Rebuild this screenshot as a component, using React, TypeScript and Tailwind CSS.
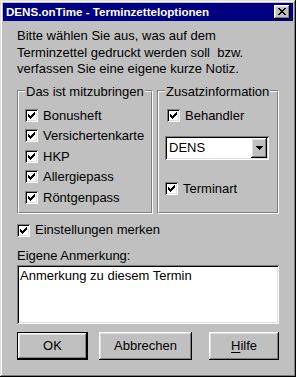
import React from 'react';

const raised = 'shadow-[inset_-1px_-1px_#000,inset_1px_1px_#fff,inset_-2px_-2px_#808080,inset_2px_2px_#dfdfdf]';
const sunken = 'shadow-[inset_1px_1px_#808080,inset_-1px_-1px_#fff,inset_2px_2px_#000,inset_-2px_-2px_#dfdfdf]';

const CheckMark = () => (
  <svg width="7" height="7" viewBox="0 0 7 7" shapeRendering="crispEdges">
    <path
      fill="#000"
      d="M6 0h1v3h-1zM5 1h1v3h-1zM0 2h1v3h-1zM1 3h1v3h-1zM4 2h1v3h-1zM3 3h1v3h-1zM2 4h1v3h-1z"
    />
  </svg>
);

const Checkbox = () => (
  <span className={`w-[13px] h-[13px] bg-white shrink-0 flex items-center justify-center ${sunken}`}>
    <CheckMark />
  </span>
);

const CheckRow = ({ label, className = '' }: { label: string; className?: string }) => (
  <div className={`h-[20.5px] flex items-center gap-[5px] ${className}`}>
    <Checkbox />
    <span>{label}</span>
  </div>
);

const GroupBox = ({ title, className, children }: { title: string; className: string; children: React.ReactNode }) => (
  <div className={`relative border border-t-[#808080] border-l-[#808080] border-r-white border-b-white ${className}`}>
    <div className="h-full border border-t-white border-l-white border-r-[#808080] border-b-[#808080] pl-[6px] pt-[13px]">
      {children}
    </div>
    <span className="absolute left-[7px] top-[-7px] leading-[16px] px-[1px] bg-[#c0c0c0]">{title}</span>
  </div>
);

const Button = ({ children, className = '', isDefault = false }: { children: React.ReactNode; className?: string; isDefault?: boolean }) => (
  <div className={`h-[28px] ${isDefault ? 'border border-black' : ''} ${className}`}>
    <div className={`h-full flex items-center justify-center ${raised}`}>{children}</div>
  </div>
);

export default function App() {
  return (
    <div className="w-[296px] h-[377px] bg-[#c0c0c0] p-[3px] flex flex-col font-['Liberation_Sans',Arial,sans-serif] text-[13px] text-black shadow-[inset_-1px_-1px_#000,inset_1px_1px_#dfdfdf,inset_-2px_-2px_#808080,inset_2px_2px_#fff]">
      <div className="h-[18px] bg-[#000080] flex items-center pl-[3px] pr-[3px]">
        <span className="text-white font-bold text-[11.6px] leading-[18px] flex-1">DENS.onTime - Terminzetteloptionen</span>
        <div className={`w-[16px] h-[14px] bg-[#c0c0c0] flex items-center justify-center ${raised}`}>
          <svg width="8" height="7" viewBox="0 0 8 7" shapeRendering="crispEdges" className="mb-[1px]">
            <path
              fill="#000"
              d="M0 0h2v1h-2zM6 0h2v1h-2zM1 1h2v1h-2zM5 1h2v1h-2zM2 2h4v1h-4zM3 3h2v1h-2zM2 4h4v1h-4zM1 5h2v1h-2zM5 5h2v1h-2zM0 6h2v1h-2zM6 6h2v1h-2z"
            />
          </svg>
        </div>
      </div>

      <div className="flex-1 px-[14px] pt-[7px] flex flex-col">
        <p className="h-[62px] leading-[16.5px]">
          Bitte wählen Sie aus, was auf dem
          <br />
          Terminzettel gedruckt werden soll{'\u00a0'} bzw.
          <br />
          verfassen Sie eine eigene kurze Notiz.
        </p>

        <div className="flex gap-[4px]">
          <GroupBox title="Das ist mitzubringen" className="w-[136px] h-[124px]">
            <CheckRow label="Bonusheft" />
            <CheckRow label="Versichertenkarte" />
            <CheckRow label="HKP" />
            <CheckRow label="Allergiepass" />
            <CheckRow label="Röntgenpass" />
          </GroupBox>
          <GroupBox title="Zusatzinformation" className="w-[122px] h-[124px]">
            <CheckRow label="Behandler" className="pl-[2px]" />
            <div className={`mt-[10.5px] w-[104px] h-[24px] bg-white flex items-stretch p-[2px] ${sunken}`}>
              <span className="flex-1 pl-[2px] leading-[20px]">DENS</span>
              <div className={`w-[16px] bg-[#c0c0c0] flex items-center justify-center ${raised}`}>
                <svg width="7" height="4" viewBox="0 0 7 4" shapeRendering="crispEdges">
                  <path fill="#000" d="M0 0h7v1h-7zM1 1h5v1h-5zM2 2h3v1h-3zM3 3h1v1h-1z" />
                </svg>
              </div>
            </div>
            <CheckRow label="Terminart" className="mt-[18.5px]" />
          </GroupBox>
        </div>

        <div className="mt-[6px] h-[20px] flex items-center gap-[5px]">
          <Checkbox />
          <span>Einstellungen merken</span>
        </div>

        <div className="mt-[8px] leading-[16px]">Eigene Anmerkung:</div>

        <div className={`mt-[1px] h-[59px] bg-white p-[2px] ${sunken}`}>
          <div className="pl-[1px] pt-[1px] leading-[16px]">Anmerkung zu diesem Termin</div>
        </div>

        <div className="mt-[8px] flex">
          <Button isDefault className="w-[71px]">OK</Button>
          <Button className="w-[93px] ml-[11px]">Abbrechen</Button>
          <Button className="w-[70px] ml-auto">
            <span>
              <span className="underline underline-offset-2">H</span>ilfe
            </span>
          </Button>
        </div>
      </div>
    </div>
  );
}
